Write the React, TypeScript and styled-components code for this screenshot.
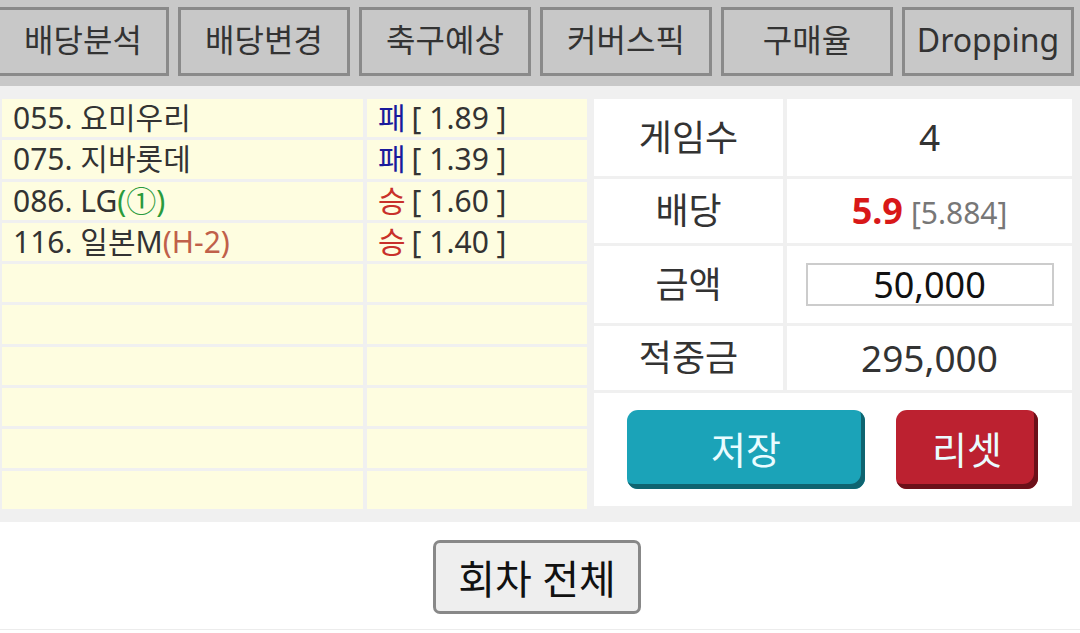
import React from 'react';
import styled, { createGlobalStyle } from 'styled-components';

const GlobalStyle = createGlobalStyle`
  html, body {
    margin: 0;
    padding: 0;
    background: #ffffff;
    font-family: "Noto Sans", "Noto Sans CJK KR", sans-serif;
  }
`;

const tabs = ['배당분석', '배당변경', '축구예상', '커버스픽', '구매율', 'Dropping'];

type Pick = { no: string; name: string; tag?: string; tagKind?: 'green' | 'brown'; side: '패' | '승'; odds: string };

const picks: Pick[] = [
  { no: '055', name: '요미우리', side: '패', odds: '1.89' },
  { no: '075', name: '지바롯데', side: '패', odds: '1.39' },
  { no: '086', name: 'LG', tag: '(①)', tagKind: 'green', side: '승', odds: '1.60' },
  { no: '116', name: '일본M', tag: '(H-2)', tagKind: 'brown', side: '승', odds: '1.40' },
];

export default function App() {
  const rows = [...picks, ...Array(10 - picks.length).fill(null)] as (Pick | null)[];

  return (
    <Page>
      <GlobalStyle />
      <TabBar>
        <TabRow>
          {tabs.map((t) => (
            <Tab key={t}>{t}</Tab>
          ))}
        </TabRow>
      </TabBar>

      <Main>
        <PickTable>
          {rows.map((p, i) => (
            <React.Fragment key={i}>
              <PickCell>
                {p && (
                  <>
                    {p.no}. {p.name}
                    {p.tag && <Tag kind={p.tagKind!}>{p.tag}</Tag>}
                  </>
                )}
              </PickCell>
              <PickCell>
                {p && (
                  <>
                    <Side lose={p.side === '패'}>{p.side}</Side>
                    <Odds>[ {p.odds} ]</Odds>
                  </>
                )}
              </PickCell>
            </React.Fragment>
          ))}
        </PickTable>

        <InfoTable>
          <Label>게임수</Label>
          <Value>4</Value>
          <Label>배당</Label>
          <Value>
            <Rate>5.9</Rate>
            <RawRate>[5.884]</RawRate>
          </Value>
          <Label>금액</Label>
          <Value>
            <Amount>50,000</Amount>
          </Value>
          <Label>적중금</Label>
          <Value>295,000</Value>
          <ActionRow>
            <ActionButton tone="teal" wide>저장</ActionButton>
            <ActionButton tone="red">리셋</ActionButton>
          </ActionRow>
        </InfoTable>
      </Main>

      <Footer>
        <RoundButton>회차 전체</RoundButton>
      </Footer>
    </Page>
  );
}

const Page = styled.div`
  width: 1080px;
  height: 633px;
  overflow: hidden;
  background: #ffffff;
`;

const TabBar = styled.div`
  height: 86px;
  box-sizing: border-box;
  padding-top: 7px;
  background: #c8c8c8;
  overflow: hidden;
`;

const TabRow = styled.div`
  display: flex;
  gap: 9px;
  margin-left: -3px;
`;

const Tab = styled.div`
  flex: 0 0 172px;
  height: 69px;
  box-sizing: border-box;
  border: 3px solid #8a8a8a;
  display: flex;
  align-items: center;
  justify-content: center;
  font-size: 32px;
  line-height: 1.2;
  color: #333333;
  padding-bottom: 3px;
  white-space: nowrap;
`;

const Main = styled.div`
  height: 436px;
  box-sizing: border-box;
  padding: 13px 8px 0 2px;
  background: #f0f0f0;
  display: flex;
  align-items: flex-start;
  gap: 7px;
`;

const PickTable = styled.div`
  width: 585px;
  display: grid;
  grid-template-columns: 361px 220px;
  grid-auto-rows: 38.3px;
  column-gap: 4px;
  row-gap: 3px;
`;

const PickCell = styled.div`
  background: #fefde0;
  display: flex;
  align-items: center;
  padding-left: 11px;
  font-size: 30px;
  line-height: 1;
  color: #333333;
  white-space: nowrap;
`;

const Tag = styled.span<{ kind: 'green' | 'brown' }>`
  color: ${({ kind }) => (kind === 'green' ? '#2a9a3c' : '#c0604a')};
`;

const Side = styled.span<{ lose: boolean }>`
  color: ${({ lose }) => (lose ? '#1a1a9c' : '#c8302a')};
  margin-right: 6px;
`;

const Odds = styled.span`
  color: #333333;
`;

const InfoTable = styled.div`
  width: 478px;
  display: grid;
  grid-template-columns: 189px 285px;
  grid-template-rows: 77px 64px 77px 64px 113px;
  column-gap: 4px;
  row-gap: 3px;
`;

const Label = styled.div`
  background: #ffffff;
  display: flex;
  align-items: center;
  justify-content: center;
  font-size: 36px;
  line-height: 1.2;
  color: #333333;
`;

const Value = styled(Label)`
  font-size: 37px;
`;

const Rate = styled.span`
  color: #d81818;
  font-weight: 700;
  font-size: 36px;
`;

const RawRate = styled.span`
  color: #777777;
  font-size: 30px;
  margin-left: 8px;
  padding-top: 4px;
`;

const Amount = styled.div`
  width: 248px;
  height: 43px;
  box-sizing: border-box;
  border: 2px solid #cccccc;
  display: flex;
  align-items: center;
  justify-content: center;
  color: #111111;
  font-size: 36px;
  line-height: 1;
`;

const ActionRow = styled.div`
  grid-column: 1 / span 2;
  background: #ffffff;
  display: flex;
  align-items: center;
  padding-left: 33px;
  gap: 31px;
`;

const ActionButton = styled.div<{ tone: 'teal' | 'red'; wide?: boolean }>`
  width: ${({ wide }) => (wide ? '238px' : '142px')};
  height: 79px;
  box-sizing: border-box;
  border-radius: 11px;
  background: ${({ tone }) => (tone === 'teal' ? '#1ba3b8' : '#bc2130')};
  box-shadow: inset -4px -5px 0 ${({ tone }) => (tone === 'teal' ? '#0f6470' : '#6c1019')};
  display: flex;
  align-items: center;
  justify-content: center;
  padding-bottom: 4px;
  color: #eafcff;
  font-size: 38px;
`;

const Footer = styled.div`
  height: 108px;
  box-sizing: border-box;
  padding-top: 18px;
  border-bottom: 1px solid #ececec;
  display: flex;
  justify-content: center;
`;

const RoundButton = styled.div`
  width: 208px;
  height: 74px;
  margin-left: -6px;
  box-sizing: border-box;
  border: 3px solid #888888;
  border-radius: 7px;
  background: #eeeeee;
  display: flex;
  align-items: center;
  justify-content: center;
  font-size: 40px;
  color: #111111;
`;
